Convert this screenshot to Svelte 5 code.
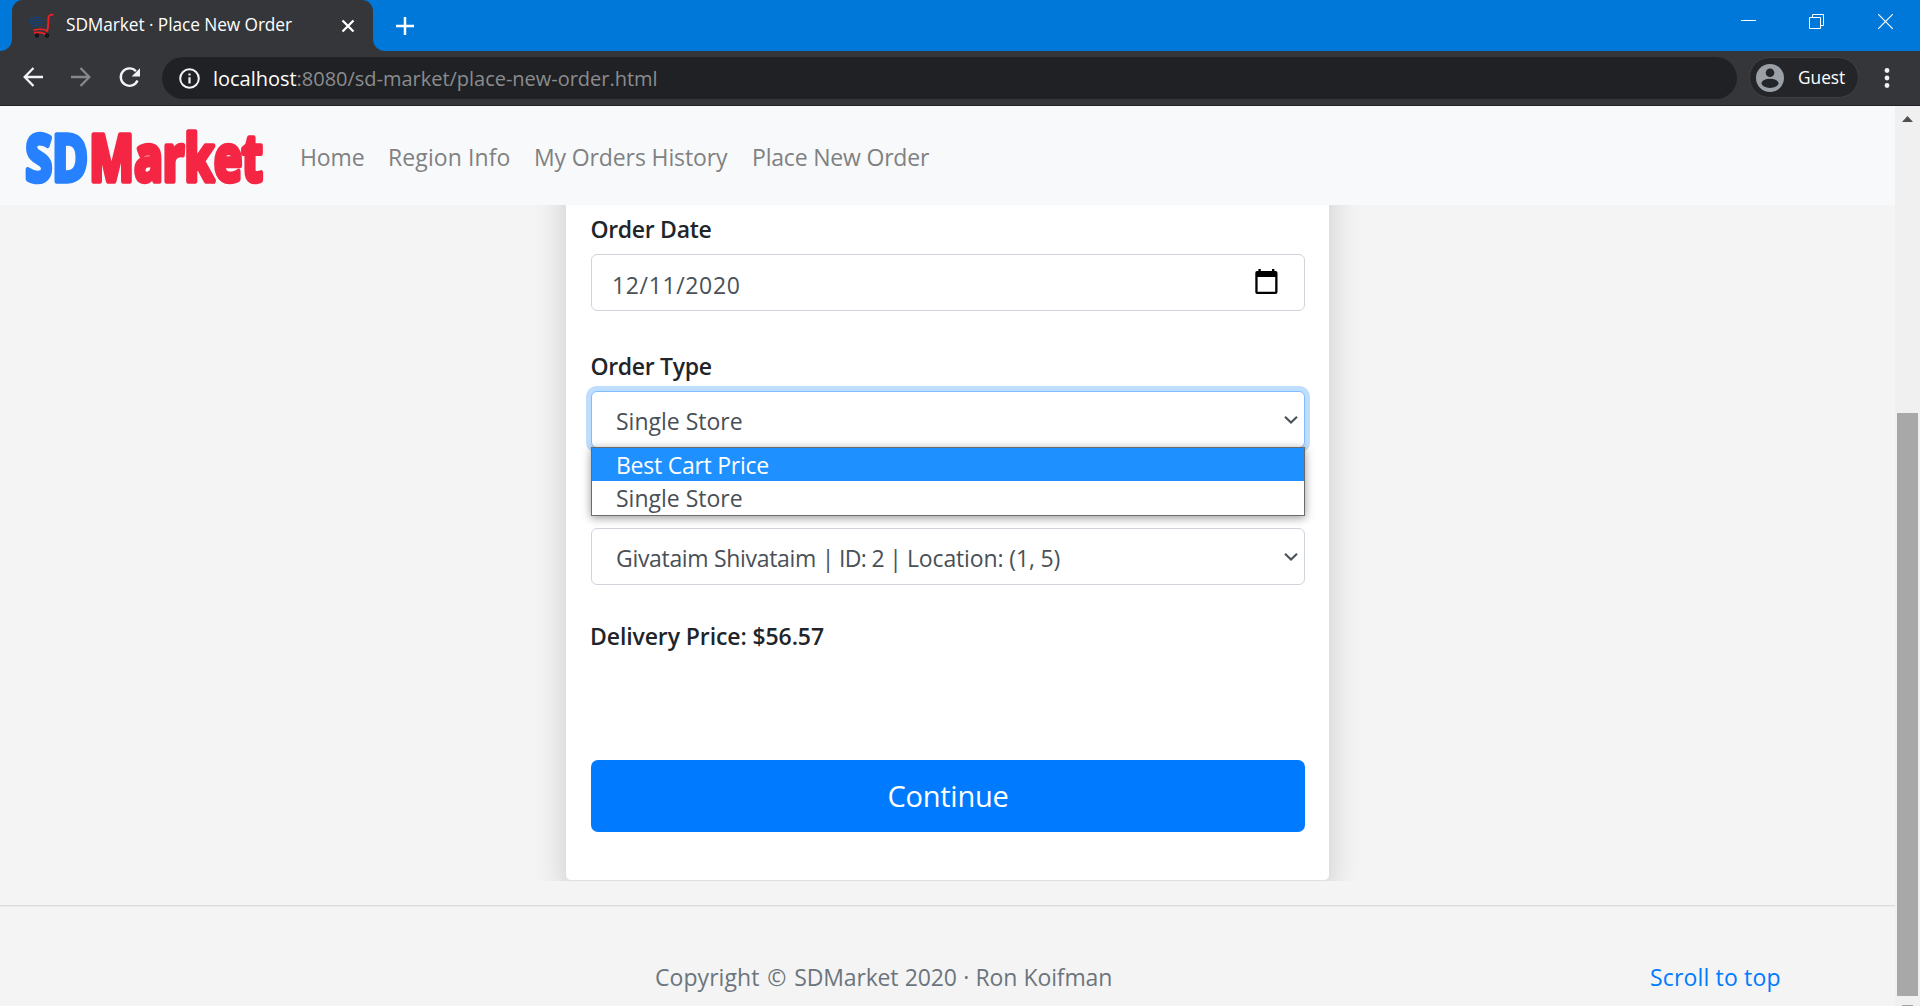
<script>
  const links = ['Home', 'Region Info', 'My Orders History', 'Place New Order'];
  const options = ['Best Cart Price', 'Single Store'];
  let highlighted = $state(0);
</script>

{#snippet chevron()}
  <svg class="chevron" width="16" height="10" viewBox="0 0 16 10">
    <path d="M2 1.8 L8 7.6 L14 1.8" fill="none" stroke="#495057" stroke-width="2.1" />
  </svg>
{/snippet}

<div class="window">
  <header class="titlebar">
    <div class="edge"></div>
    <div class="tab-back">
      <div class="tab">
        <svg class="favicon" width="26" height="26" viewBox="0 0 26 26" fill="none">
          <path d="M2 6 Q7 3.5 13 5 M2 8.5 Q8 6 15 8 M2 11 Q8 8.5 14 10.5 M3 13.5 Q8 11.5 13 13" stroke="#14427c" stroke-width="1.2" />
          <path d="M1.6 5.5 Q1 10 4 14" stroke="#14427c" stroke-width="1.2" />
          <path d="M24.5 1.8 Q19.6 1 19.4 5 L19 14 Q18.7 17 17.5 19" stroke="#ee1f26" stroke-width="1.9" />
          <path d="M4.5 17.4 Q11 15 18.5 17.6 M5 19.8 Q12 18.4 17 21.4" stroke="#ee1f26" stroke-width="1.7" />
          <circle cx="8" cy="22.6" r="1.4" stroke="#0c0c0c" stroke-width="1.3" />
          <circle cx="18" cy="22.6" r="1.4" stroke="#0c0c0c" stroke-width="1.3" />
        </svg>
        <span class="tab-title">SDMarket · Place New Order</span>
        <svg class="tab-close" width="14" height="14" viewBox="0 0 14 14">
          <path d="M1.5 1.5 L12.5 12.5 M12.5 1.5 L1.5 12.5" stroke="#fff" stroke-width="2.3" />
        </svg>
      </div>
    </div>
    <div class="strip">
      <svg width="18" height="18" viewBox="0 0 18 18">
        <path d="M9 0 V18 M0 9 H18" stroke="#fff" stroke-width="2.5" />
      </svg>
      <div class="controls">
        <svg width="15" height="15" viewBox="0 0 15 15"><path d="M0 6.5 H15" stroke="#fff" /></svg>
        <svg width="15" height="15" viewBox="0 0 15 15" fill="none" stroke="#fff">
          <path d="M0.5 3.5 H11.5 V14.5 H0.5 Z M3.5 3.5 V0.5 H14.5 V11.5 H11.5" />
        </svg>
        <svg width="15" height="15" viewBox="0 0 15 15"><path d="M0 0 L15 15 M15 0 L0 15" stroke="#fff" stroke-width="1.2" /></svg>
      </div>
    </div>
  </header>

  <div class="toolbar">
    <svg class="back" width="20" height="20" viewBox="0 0 20 20" fill="none" stroke="#f1f3f4" stroke-width="2.3">
      <path d="M20 10 H2 M10.5 1 L1.7 10 L10.5 19" />
    </svg>
    <svg class="forward" width="20" height="20" viewBox="0 0 20 20" fill="none" stroke="#86878a" stroke-width="2.3">
      <path d="M0 10 H18 M9.5 1 L18.3 10 L9.5 19" />
    </svg>
    <svg class="reload" width="22" height="22" viewBox="0 0 22 22">
      <path d="M16.9 4.2 A8.7 8.7 0 1 0 18.5 13.6" fill="none" stroke="#f1f3f4" stroke-width="2.4" />
      <path d="M21 1.2 V9.6 H12.6 Z" fill="#f1f3f4" />
    </svg>
    <div class="address">
      <svg width="21" height="21" viewBox="0 0 21 21">
        <circle cx="10.5" cy="10.5" r="9.3" fill="none" stroke="#f1f3f4" stroke-width="2" />
        <path d="M10.5 9.3 V15.4 M10.5 5.4 V7.6" stroke="#f1f3f4" stroke-width="2.2" />
      </svg>
      <span class="url"><b>localhost</b>:8080/sd-market/place-new-order.html</span>
    </div>
    <div class="profile">
      <svg width="28" height="28" viewBox="0 0 28 28">
        <circle cx="14" cy="14" r="14" fill="#9aa0a6" />
        <circle cx="14" cy="8.7" r="4.3" fill="#242529" />
        <ellipse cx="14" cy="19.3" rx="8.5" ry="4.6" fill="#242529" />
      </svg>
      <span>Guest</span>
    </div>
    <svg class="kebab" width="6" height="20" viewBox="0 0 6 20" fill="#f1f3f4">
      <circle cx="3" cy="2.5" r="2.4" /><circle cx="3" cy="10" r="2.4" /><circle cx="3" cy="17.5" r="2.4" />
    </svg>
  </div>

  <div class="viewport">
    <div class="page">
      <nav>
        <svg class="logo" width="250" height="99" viewBox="0 0 250 99">
          <g class="word" transform="scale(0.75 1)">
            <text class="blue" x="7.5" y="75" textLength="83" lengthAdjust="spacingAndGlyphs">SD</text>
            <text class="red" x="92.5" y="75" textLength="231" lengthAdjust="spacingAndGlyphs">Market</text>
          </g>
        </svg>
        <div class="links">
          {#each links as link}
            <a href="#top">{link}</a>
          {/each}
        </div>
      </nav>

      <main>
        <form class="card">
          <div class="label">Order Date</div>
          <div class="control date">
            <span>12/11/2020</span>
            <svg width="23" height="25" viewBox="0 0 23 25">
              <path d="M2 2 H3.4 V0 H5.8 V2 H17 V0 H19.4 V2 H20.8 Q22.5 2 22.5 4 V23 Q22.5 25 20.5 25 H2 Q0.3 25 0.3 23 V4 Q0.3 2 2 2 Z M2.6 8 V22.7 H20.2 V8 Z" fill="#000" fill-rule="evenodd" />
            </svg>
          </div>

          <div class="label type">Order Type</div>
          <div class="select-wrap">
            <div class="control select focused">
              <span class="single">Single Store</span>
              {@render chevron()}
            </div>
            <div class="dropdown">
              {#each options as option, i}
                <div class="option" class:active={i === highlighted}>{option}</div>
              {/each}
            </div>
          </div>

          <div class="control select store">
            <span class="store-name">Givataim Shivataim <i>| ID: 2 |</i> <em>Location: (1, 5)</em></span>
            {@render chevron()}
          </div>

          <div class="label price">Delivery Price: $56.57</div>
          <button type="button">Continue</button>
        </form>
      </main>

      <footer>
        <span class="copy">Copyright © <i>SDMarket 2020 · Ron Koifman</i></span>
        <a href="#top">Scroll to top</a>
      </footer>
    </div>

    <div class="scrollbar">
      <svg width="11" height="6" viewBox="0 0 11 6"><path d="M5.5 0 L11 6 H0 Z" fill="#505050" /></svg>
      <div class="thumb"></div>
      <div class="down"></div>
    </div>
  </div>
</div>

<style>
  :global(body) { margin: 0; overflow: hidden; }
  .window {
    width: 1920px; height: 1006px; overflow: hidden;
    display: flex; flex-direction: column;
    font-family: "Open Sans", "Noto Sans", sans-serif;
  }
  .window :global(*) { box-sizing: border-box; }
  svg { display: block; flex: none; }
  a { text-decoration: none; }

  .titlebar { display: flex; height: 51px; flex: none; background: #35363a; }
  .edge { width: 12px; background: #0078d9; border-bottom-right-radius: 12px; }
  .tab-back { width: 361px; background: #0078d9; }
  .tab {
    height: 51px; display: flex; align-items: center;
    padding: 0 18px 0 17px; background: #35363a; border-radius: 11px 11px 0 0;
  }
  .tab-title { flex: 1; margin-left: 11px; font-size: 17.3px; line-height: 24px; letter-spacing: -0.076px; color: #fff; white-space: nowrap; padding-bottom: 1px; }
  .strip {
    flex: 1; display: flex; align-items: center; justify-content: space-between;
    padding: 0 27px 0 23px; background: #0078d9; border-bottom-left-radius: 12px;
  }
  .controls { display: flex; gap: 54px; padding-bottom: 8px; }
  .controls svg:first-child { margin-right: -1px; }

  .toolbar {
    height: 55px; flex: none; display: flex; align-items: flex-start;
    background: #35363a; border-bottom: 1px solid #222327;
  }
  .back { margin: 16px 0 0 23px; }
  .forward { margin: 16px 0 0 28px; }
  .reload { margin: 16px 0 0 28px; }
  .address {
    width: 1575px; height: 42px; margin: 6px 0 0 21px; padding: 0 17px;
    display: flex; align-items: center; border-radius: 21px; background: #202124;
  }
  .url { margin-left: 13px; padding-top: 1px; font-size: 20px; line-height: 28px; color: #8b8c8e; white-space: nowrap; letter-spacing: -0.02px; }
  .url b { font-weight: 400; color: #fff; }
  .profile {
    width: 110px; height: 41px; margin: 6px 0 0 12px; padding-left: 6px;
    display: flex; align-items: center; border: 1px solid #3f4044; border-radius: 21px;
    background: #242529; color: #fff; font-size: 17.3px; line-height: 24px;
  }
  .profile span { margin-left: 14px; padding-top: 1px; }
  .kebab { margin: 17px 0 0 25px; }

  .viewport { flex: 1; min-height: 0; display: flex; }
  .page { width: 1895px; display: flex; flex-direction: column; background: #f4f4f4; }

  nav { height: 99px; flex: none; display: flex; padding-left: 20px; background: #f8f9fb; }
  .word { font-family: "Open Sans", sans-serif; font-weight: 700; font-size: 64px; stroke-width: 5.5px; stroke-linejoin: round; }
  .blue { fill: #2781ff; stroke: #2781ff; }
  .red { fill: #f42643; stroke: #f42643; }
  .links { display: grid; grid-template-columns: 88px 146px 218px auto; margin: 33px 0 0 30px; font-size: 23px; line-height: 36px; }
  .links a { color: #808182; white-space: nowrap; letter-spacing: -0.1px; }
  .links a:nth-child(2) { letter-spacing: 0.1px; }
  .links a:nth-child(3) { letter-spacing: -0.12px; }
  .links a:nth-child(4) { letter-spacing: -0.19px; }

  main { height: 676px; flex: none; overflow: hidden; display: flex; padding-left: 565px; }
  /* The card's top edge lies above the scrolled area. */
  .card {
    width: 765px; height: 736px; margin-top: -60px; padding: 65px 24px 0 25px; background: #fff;
    border: 1px solid #dfdfdf; border-radius: 6px;
    box-shadow: 0 14px 32px rgba(0, 0, 0, 0.165);
    font-size: 23px; line-height: 36px; color: #495057;
  }
  .label { height: 36px; margin: 0 0 7px -0.6px; font-weight: 600; color: #212529; letter-spacing: -0.3px; }
  .label.type { margin-top: 37px; }
  .label.price { margin: 33px 0 106px -1px; letter-spacing: -0.1px; }
  .control {
    height: 57px; display: flex; align-items: center; justify-content: space-between;
    border: 1px solid #ced4da; border-radius: 6px; background: #fff; white-space: nowrap;
  }
  .date { padding: 0 26px 0 20px; letter-spacing: 0.64px; }
  .date span { padding-top: 4px; }
  .date svg { margin-bottom: 2px; }
  .select { padding: 0 5px 0 24px; }
  .select span { padding-top: 3px; }
  .store-name { letter-spacing: -0.32px; }
  .store-name i { font-style: normal; letter-spacing: -0.65px; }
  .store-name em { font-style: normal; letter-spacing: -0.13px; }
  .focused { border-color: #80bdff; box-shadow: 0 0 0 5px #bfdeff; }
  .store { margin-top: 80px; }
  .select-wrap { position: relative; }
  .dropdown {
    position: absolute; left: 0; right: 0; top: 56px; height: 69px;
    border: 1px solid #6b6b6b; background: #fff; box-shadow: 0 2px 9px rgba(0, 0, 0, 0.4);
  }
  .option { height: 33px; line-height: 35px; padding-left: 24px; }
  .option.active { background: #1e90ff; color: #fff; letter-spacing: -0.25px; }
  button {
    display: block; width: 100%; height: 72px; padding: 0; border: 0; border-radius: 7px;
    background: #007bff; color: #fff; font: 29px/72px "Open Sans", sans-serif; letter-spacing: -0.25px;
  }

  footer {
    flex: 1; margin-top: 24px; display: flex; align-items: flex-start;
    border-top: 1px solid #dcdcdc; padding: 53px 0 0 655px;
    box-shadow: inset 0 1px 0 #ececec;
    font-size: 23px; line-height: 36px; white-space: nowrap;
  }
  .copy { width: 995px; color: #6c757d; letter-spacing: 0.06px; word-spacing: 1.8px; }
  .copy i { font-style: normal; letter-spacing: -0.16px; word-spacing: 0.6px; }
  footer a { color: #007bff; letter-spacing: 0.16px; }

  .scrollbar { width: 25px; display: flex; flex-direction: column; align-items: center; padding-top: 10px; background: #f0f0f0; }
  .thumb { width: 21px; height: 583px; margin-top: 291px; flex: none; background: #a8a8a8; }
  .down { width: 11px; height: 1px; margin-top: 9px; flex: none; background: #a3a3a3; }
</style>
